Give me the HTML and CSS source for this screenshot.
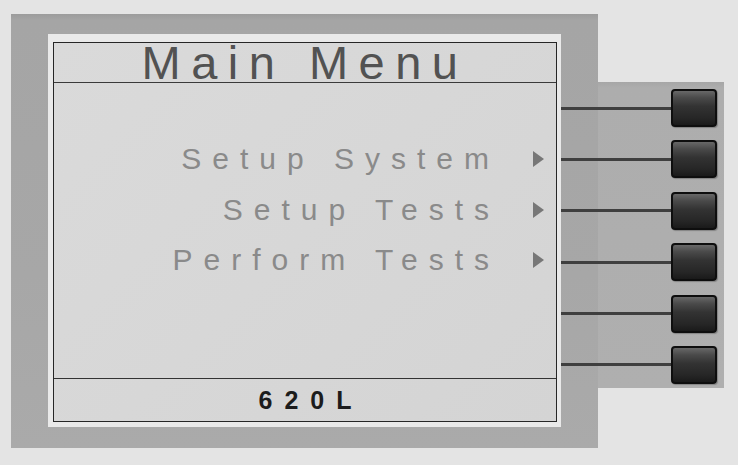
FILE: index.html
```html
<!DOCTYPE html>
<html>
<head>
<meta charset="utf-8">
<link rel="stylesheet" href="styles.css">
</head>
<body>
<div class="stage">
  <div class="device">
    <div class="panel">
      <div class="lcd">
        <div class="screen">
          <div class="title">Main Menu</div>
          <div class="menu">
            <div class="item"><span class="label">Setup System</span><span class="arrow"></span></div>
            <div class="item"><span class="label">Setup Tests</span><span class="arrow"></span></div>
            <div class="item"><span class="label">Perform Tests</span><span class="arrow"></span></div>
          </div>
          <div class="footer">620L</div>
        </div>
      </div>
    </div>
    <div class="tab">
      <div class="keys">
        <div class="keyrow"><span class="wire"></span><span class="key"></span></div>
        <div class="keyrow"><span class="wire"></span><span class="key"></span></div>
        <div class="keyrow"><span class="wire"></span><span class="key"></span></div>
        <div class="keyrow"><span class="wire"></span><span class="key"></span></div>
        <div class="keyrow"><span class="wire"></span><span class="key"></span></div>
        <div class="keyrow"><span class="wire"></span><span class="key"></span></div>
      </div>
    </div>
  </div>
</div>
</body>
</html>
```

FILE: styles.css
```css
html, body {
  margin: 0;
  padding: 0;
  background: #ffffff;
}

.stage {
  width: 738px;
  height: 465px;
  background: #e4e4e4;
  box-sizing: border-box;
  padding: 14px 0 0 11px;
  font-family: "Liberation Sans", Arial, sans-serif;
}

.device {
  display: flex;
  align-items: flex-start;
}

.panel {
  width: 587px;
  height: 434px;
  box-sizing: border-box;
  padding: 20px 0 0 37px;
  background: linear-gradient(to bottom, #9c9c9c 0, #a5a5a5 6px, #a7a7a7 60%, #aaaaaa 100%);
}

.tab {
  width: 126px;
  height: 306px;
  margin-top: 68px;
  background: linear-gradient(to bottom, #a6a6a6 0, #adadad 6px, #afafaf 100%);
}

.lcd {
  width: 513px;
  height: 393px;
  box-sizing: border-box;
  padding: 8px 4px 5px 5px;
  background: #e9e9e9;
}

.screen {
  height: 100%;
  box-sizing: border-box;
  border: 1px solid #262626;
  display: flex;
  flex-direction: column;
  background: linear-gradient(135deg, #dadada 0%, #d7d7d7 50%, #d4d4d4 100%);
}

.title {
  display: flex;
  justify-content: center;
  align-items: center;
  height: 39px;
  border-bottom: 1px solid #3a3a3a;
  font-size: 47px;
  line-height: 39px;
  letter-spacing: 10.5px;
  color: #525252;
  white-space: nowrap;
}

.menu {
  flex: 1;
  display: flex;
  flex-direction: column;
  align-items: stretch;
  padding: 51px 12px 0 0;
}

.item {
  display: flex;
  justify-content: flex-end;
  align-items: center;
  height: 50.5px;
}

.label {
  font-size: 30px;
  line-height: 36px;
  letter-spacing: 11px;
  color: #8a8a8a;
  white-space: nowrap;
}

.arrow {
  width: 0;
  height: 0;
  margin-left: 33px;
  border-top: 8px solid transparent;
  border-bottom: 8px solid transparent;
  border-left: 11px solid #777777;
}

.footer {
  height: 42px;
  line-height: 42px;
  border-top: 1px solid #333333;
  text-align: center;
  font-size: 25px;
  font-weight: bold;
  letter-spacing: 12px;
  padding-left: 12px;
  color: #1c1c1c;
}

.keys {
  margin-left: -37px;
  width: 163px;
  padding-top: 7px;
  display: grid;
  grid-auto-rows: 38px;
  row-gap: 13.4px;
}

.keyrow {
  display: flex;
  align-items: center;
  padding-right: 7px;
}

.wire {
  flex: 1;
  height: 3px;
  background: #3f3f3f;
}

.key {
  width: 46px;
  height: 38px;
  box-sizing: border-box;
  border: 2px solid #0e0e0e;
  border-radius: 4px;
  background: linear-gradient(to bottom, #686868 0%, #4a4a4a 20%, #333333 45%, #262626 80%, #1a1a1a 100%);
  box-shadow: 1px 1px 1px rgba(0, 0, 0, 0.25);
}
```
